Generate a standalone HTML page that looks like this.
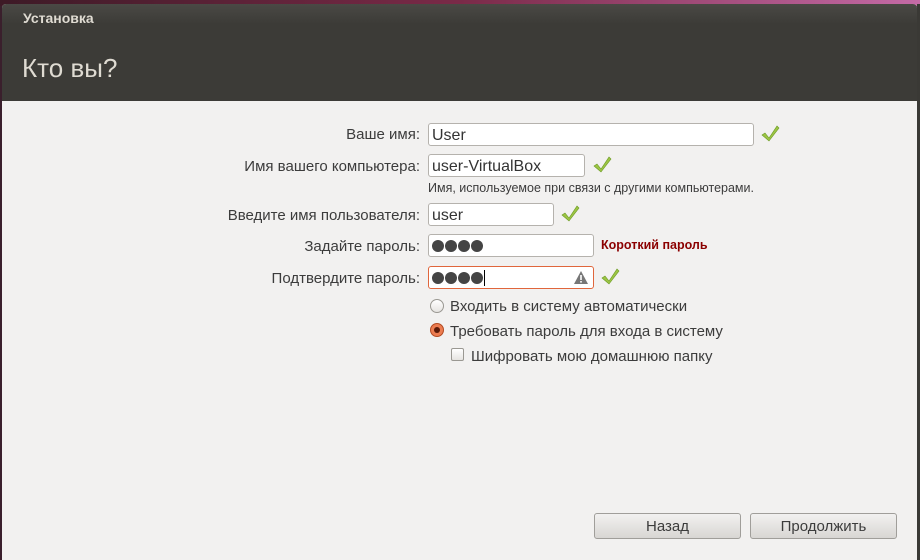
<!DOCTYPE html><html><head><meta charset="utf-8"><style>
*{margin:0;padding:0;box-sizing:border-box}
body{width:920px;height:560px;overflow:hidden;background:#3a1f2c;font-family:"Liberation Sans","DejaVu Sans",sans-serif;position:relative}
.top{position:absolute;left:0;top:0;width:920px;height:6px;background:linear-gradient(90deg,#3d1a26,#7a2a48 50%,#c46aa6)}
.win{position:absolute;left:2px;top:4px;width:915px;height:556px;background:#f2f1f0;border-radius:4px 4px 0 0;overflow:hidden}
.hdr{position:absolute;left:0;top:0;width:915px;height:97px;background:linear-gradient(#4a4945,#3c3b37 20px)}
.t1{position:absolute;left:21px;top:6px;color:#dfdbd2;font-weight:bold;font-size:14px}
.t2{position:absolute;left:20px;top:49px;color:#dfdbd2;font-size:26px}
.a{position:absolute;font-size:15px;color:#3c3c3c;white-space:nowrap}
.lbl{position:absolute;right:497px;font-size:15px;color:#3c3c3c;white-space:nowrap}
.in{position:absolute;left:426px;height:23px;background:#fff;border:1px solid #b5b2ad;border-radius:3px;font-size:16px;color:#333;padding:3px 3px 1px;line-height:17px}
.ck{position:absolute;width:20px;height:20px}
.btn{position:absolute;top:509px;height:26px;width:147px;border:1px solid #a09e9a;border-radius:3px;background:linear-gradient(#f2f1f0,#d8d6d3);font-size:15px;color:#3c3c3c;text-align:center;line-height:25px}
.dot{display:inline-block;width:12px;height:12px;border-radius:50%;background:#444;margin-right:1px;vertical-align:-1px}
</style></head><body>
<div class="top"></div>
<div class="win">
<div class="hdr"><div class="t1">Установка</div><div class="t2">Кто вы?</div></div>
<div class="lbl" style="top:122px">Ваше имя:</div>
<div class="in" style="top:119px;width:326px">User</div>
<div class="lbl" style="top:154px">Имя вашего компьютера:</div>
<div class="in" style="top:150px;width:157px">user-VirtualBox</div>
<div class="a" style="left:426px;top:177px;font-size:12.5px">Имя, используемое при связи с другими компьютерами.</div>
<div class="lbl" style="top:203px">Введите имя пользователя:</div>
<div class="in" style="top:199px;width:126px">user</div>
<div class="lbl" style="top:234px">Задайте пароль:</div>
<div class="in" style="top:230px;width:166px"><span class="dot"></span><span class="dot"></span><span class="dot"></span><span class="dot"></span></div>
<div class="a" style="left:599px;top:234px;font-size:12.5px;font-weight:bold;color:#8b0000">Короткий пароль</div>
<div class="lbl" style="top:266px">Подтвердите пароль:</div>
<div class="in" style="top:262px;width:166px;border-color:#e0663c"><span class="dot"></span><span class="dot"></span><span class="dot"></span><span class="dot"></span><span style="display:inline-block;width:1px;height:16px;background:#000;vertical-align:-3px"></span>
<svg style="position:absolute;right:4px;top:3px" width="16" height="15" viewBox="0 0 16 15"><path d="M8 1L15 14H1Z" fill="#777"/><rect x="7.2" y="5" width="1.6" height="5" fill="#fff"/><rect x="7.2" y="11" width="1.6" height="1.6" fill="#fff"/></svg></div>
<svg class="ck" style="left:758px;top:120px" viewBox="0 0 20 20"><path d="M2 11l3-2 4 5L17 2l2 2-10 13z" fill="#9cc444" stroke="#6a9a22" stroke-width=".6"/></svg>
<svg class="ck" style="left:590px;top:151px" viewBox="0 0 20 20"><path d="M2 11l3-2 4 5L17 2l2 2-10 13z" fill="#9cc444" stroke="#6a9a22" stroke-width=".6"/></svg>
<svg class="ck" style="left:558px;top:200px" viewBox="0 0 20 20"><path d="M2 11l3-2 4 5L17 2l2 2-10 13z" fill="#9cc444" stroke="#6a9a22" stroke-width=".6"/></svg>
<svg class="ck" style="left:598px;top:263px" viewBox="0 0 20 20"><path d="M2 11l3-2 4 5L17 2l2 2-10 13z" fill="#9cc444" stroke="#6a9a22" stroke-width=".6"/></svg>
<div style="position:absolute;left:428px;top:295px;width:14px;height:14px;border-radius:50%;border:1px solid #9a9892;background:linear-gradient(#fff,#e6e4e1)"></div>
<div class="a" style="left:448px;top:294px">Входить в систему автоматически</div>
<div style="position:absolute;left:428px;top:319px;width:14px;height:14px;border-radius:50%;border:1px solid #b24a22;background:#ec7c50"><div style="position:absolute;left:3px;top:3px;width:6px;height:6px;border-radius:50%;background:#5a1a08"></div></div>
<div class="a" style="left:448px;top:319px">Требовать пароль для входа в систему</div>
<div style="position:absolute;left:449px;top:344px;width:13px;height:13px;border-radius:2px;border:1px solid #9a9892;background:linear-gradient(#fff,#e6e4e1)"></div>
<div class="a" style="left:469px;top:344px">Шифровать мою домашнюю папку</div>
<div class="btn" style="left:592px">Назад</div>
<div class="btn" style="left:748px">Продолжить</div>
</div>
<div style="position:absolute;left:917px;top:4px;width:3px;height:556px;background:#3a3935"></div>
</body></html>
